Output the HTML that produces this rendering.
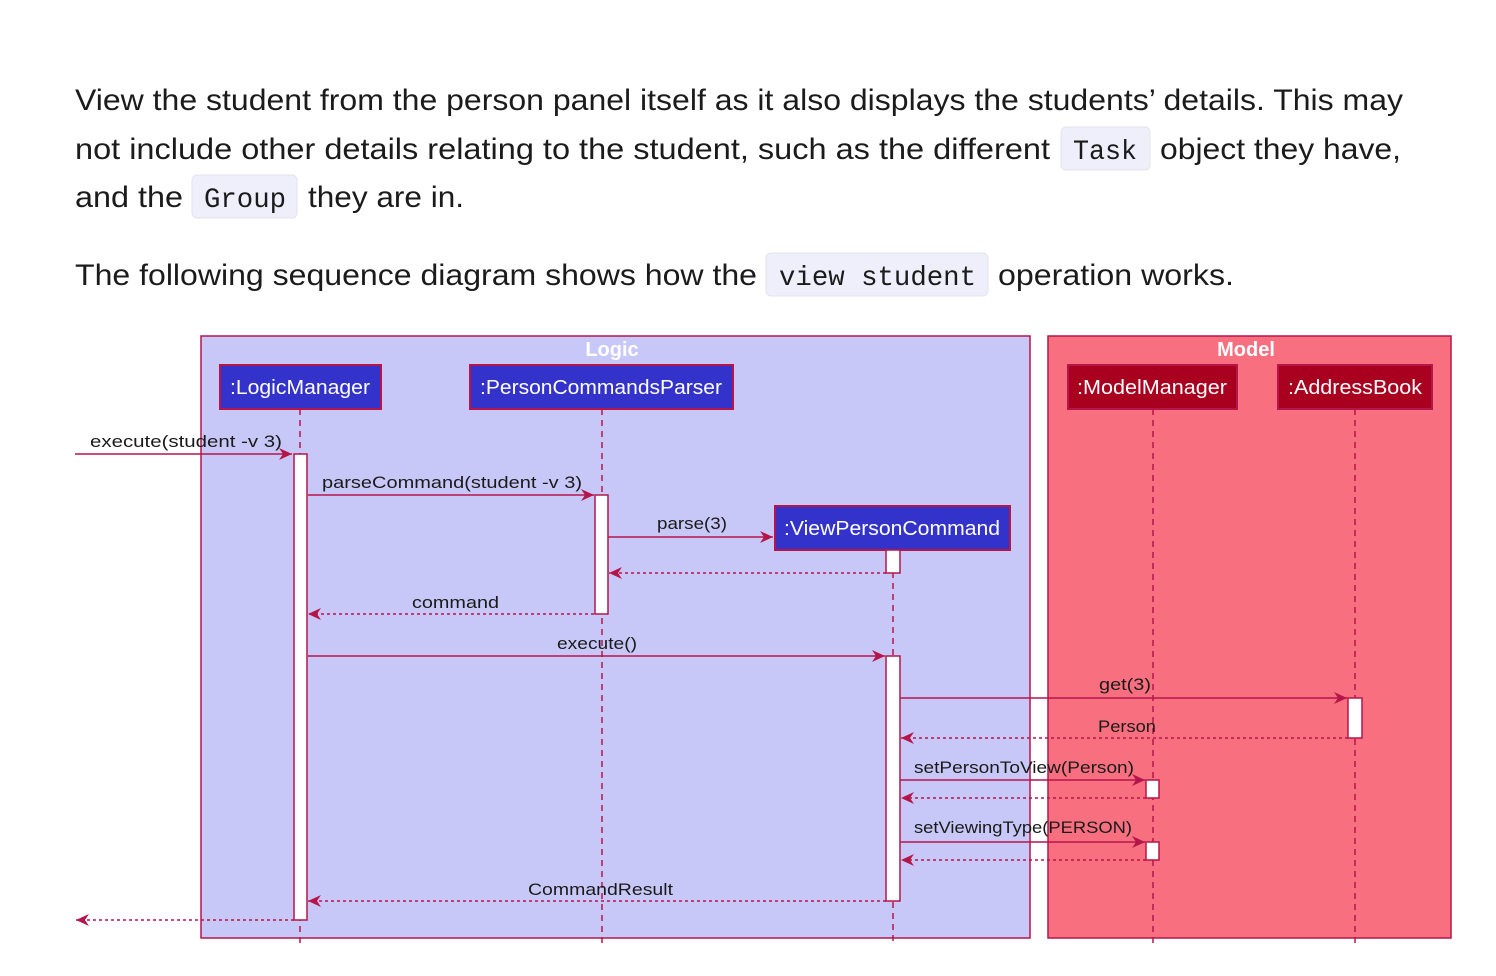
<!DOCTYPE html>
<html><head><meta charset="utf-8"><style>
html,body{margin:0;padding:0;background:#fff;width:1496px;height:976px;overflow:hidden}
svg{display:block}
.t{font-family:"Liberation Sans",sans-serif;font-size:30px;fill:#1b1b1b}
.c{font-family:"Liberation Mono",monospace;font-size:28px;fill:#1b1b1b}
.l{font-family:"Liberation Sans",sans-serif;font-size:17px;fill:#1a1a1a}
.b{font-family:"Liberation Sans",sans-serif;font-size:20px;fill:#fff}
</style></head><body>
<svg width="1496" height="976" viewBox="0 0 1496 976" xmlns="http://www.w3.org/2000/svg">
<defs>
<marker id="a" markerWidth="14" markerHeight="12" refX="13" refY="6" orient="auto" markerUnits="userSpaceOnUse"><path d="M0,0 L13,6 L0,12 L4,6 Z" fill="#b5164a"/></marker>
</defs>
<text class="t" x="75" y="110" textLength="1328" lengthAdjust="spacingAndGlyphs">View the student from the person panel itself as it also displays the students’ details. This may</text>
<text class="t" x="75" y="159" textLength="975" lengthAdjust="spacingAndGlyphs">not include other details relating to the student, such as the different</text>
<rect x="1061" y="127" width="89" height="43" rx="5" fill="#efeffc" stroke="#e3e3ee"/>
<text class="c" x="1073" y="159" textLength="64" lengthAdjust="spacingAndGlyphs">Task</text>
<text class="t" x="1160" y="159" textLength="241" lengthAdjust="spacingAndGlyphs">object they have,</text>
<text class="t" x="75" y="207" textLength="108" lengthAdjust="spacingAndGlyphs">and the</text>
<rect x="192" y="175" width="105" height="43" rx="5" fill="#efeffc" stroke="#e3e3ee"/>
<text class="c" x="204" y="207" textLength="82" lengthAdjust="spacingAndGlyphs">Group</text>
<text class="t" x="308" y="207" textLength="156" lengthAdjust="spacingAndGlyphs">they are in.</text>
<text class="t" x="75" y="285" textLength="682" lengthAdjust="spacingAndGlyphs">The following sequence diagram shows how the</text>
<rect x="766" y="253" width="222" height="43" rx="5" fill="#efeffc" stroke="#e3e3ee"/>
<text class="c" x="779" y="285" textLength="197" lengthAdjust="spacingAndGlyphs">view student</text>
<text class="t" x="998" y="285" textLength="236" lengthAdjust="spacingAndGlyphs">operation works.</text>

<rect x="201" y="336" width="829" height="602" fill="#c8c8f8" stroke="#b5164a" stroke-width="1.5"/>
<rect x="1048" y="336" width="403" height="602" fill="#f8707f" stroke="#b5164a" stroke-width="1.5"/>
<text class="b" x="612" y="356" text-anchor="middle" font-weight="bold" fill="#fff">Logic</text>
<text class="b" x="1246" y="356" text-anchor="middle" font-weight="bold">Model</text>

<g stroke="#b5164a" stroke-width="1.5" stroke-dasharray="6,5">
<line x1="300" y1="409" x2="300" y2="946"/>
<line x1="602" y1="409" x2="602" y2="946"/>
<line x1="893" y1="550" x2="893" y2="946"/>
<line x1="1153" y1="409" x2="1153" y2="946"/>
<line x1="1355" y1="409" x2="1355" y2="946"/>
</g>

<g stroke="#b5164a" stroke-width="2">
<rect x="220" y="365" width="161" height="44" fill="#3333cc"/>
<rect x="470" y="365" width="263" height="44" fill="#3333cc"/>
<rect x="775" y="506" width="235" height="44" fill="#3333cc"/>
<rect x="1068" y="365" width="169" height="44" fill="#a8001e"/>
<rect x="1278" y="365" width="154" height="44" fill="#a8001e"/>
</g>
<text class="b" x="300" y="394" text-anchor="middle" textLength="140" lengthAdjust="spacingAndGlyphs">:LogicManager</text>
<text class="b" x="601" y="394" text-anchor="middle" textLength="242" lengthAdjust="spacingAndGlyphs">:PersonCommandsParser</text>
<text class="b" x="892" y="535" text-anchor="middle" textLength="216" lengthAdjust="spacingAndGlyphs">:ViewPersonCommand</text>
<text class="b" x="1152" y="394" text-anchor="middle" textLength="150" lengthAdjust="spacingAndGlyphs">:ModelManager</text>
<text class="b" x="1355" y="394" text-anchor="middle" textLength="134" lengthAdjust="spacingAndGlyphs">:AddressBook</text>

<g stroke="#b5164a" stroke-width="1.5" fill="#fff">
<rect x="294" y="454" width="13" height="466"/>
<rect x="595" y="495" width="13" height="119"/>
<rect x="886" y="550" width="14" height="23"/>
<rect x="886" y="656" width="14" height="245"/>
<rect x="1348" y="698" width="14" height="40"/>
<rect x="1146" y="780" width="13" height="18"/>
<rect x="1146" y="842" width="13" height="18"/>
</g>

<g stroke="#b5164a" stroke-width="1.5" marker-end="url(#a)">
<line x1="75" y1="454" x2="292" y2="454"/>
<line x1="308" y1="495" x2="594" y2="495"/>
<line x1="608" y1="537" x2="773" y2="537"/>
<line x1="308" y1="656" x2="885" y2="656"/>
<line x1="900" y1="698" x2="1347" y2="698"/>
<line x1="900" y1="780" x2="1145" y2="780"/>
<line x1="900" y1="842" x2="1145" y2="842"/>
</g>
<g stroke="#b5164a" stroke-width="1.5" stroke-dasharray="3,3" marker-end="url(#a)">
<line x1="886" y1="573" x2="609" y2="573"/>
<line x1="594" y1="614" x2="308" y2="614"/>
<line x1="1348" y1="738" x2="901" y2="738"/>
<line x1="1146" y1="798" x2="901" y2="798"/>
<line x1="1146" y1="860" x2="901" y2="860"/>
<line x1="886" y1="901" x2="308" y2="901"/>
<line x1="294" y1="920" x2="76" y2="920"/>
</g>

<text class="l" x="90" y="447" textLength="192" lengthAdjust="spacingAndGlyphs">execute(student -v 3)</text>
<text class="l" x="322" y="488" textLength="260" lengthAdjust="spacingAndGlyphs">parseCommand(student -v 3)</text>
<text class="l" x="657" y="529" textLength="70" lengthAdjust="spacingAndGlyphs">parse(3)</text>
<text class="l" x="412" y="608" textLength="87" lengthAdjust="spacingAndGlyphs">command</text>
<text class="l" x="557" y="649" textLength="80" lengthAdjust="spacingAndGlyphs">execute()</text>
<text class="l" x="1099" y="690" textLength="52" lengthAdjust="spacingAndGlyphs">get(3)</text>
<text class="l" x="1098" y="732" textLength="58" lengthAdjust="spacingAndGlyphs">Person</text>
<text class="l" x="914" y="773" textLength="220" lengthAdjust="spacingAndGlyphs">setPersonToView(Person)</text>
<text class="l" x="914" y="833" textLength="218" lengthAdjust="spacingAndGlyphs">setViewingType(PERSON)</text>
<text class="l" x="528" y="895" textLength="145" lengthAdjust="spacingAndGlyphs">CommandResult</text>
</svg>
</body></html>
